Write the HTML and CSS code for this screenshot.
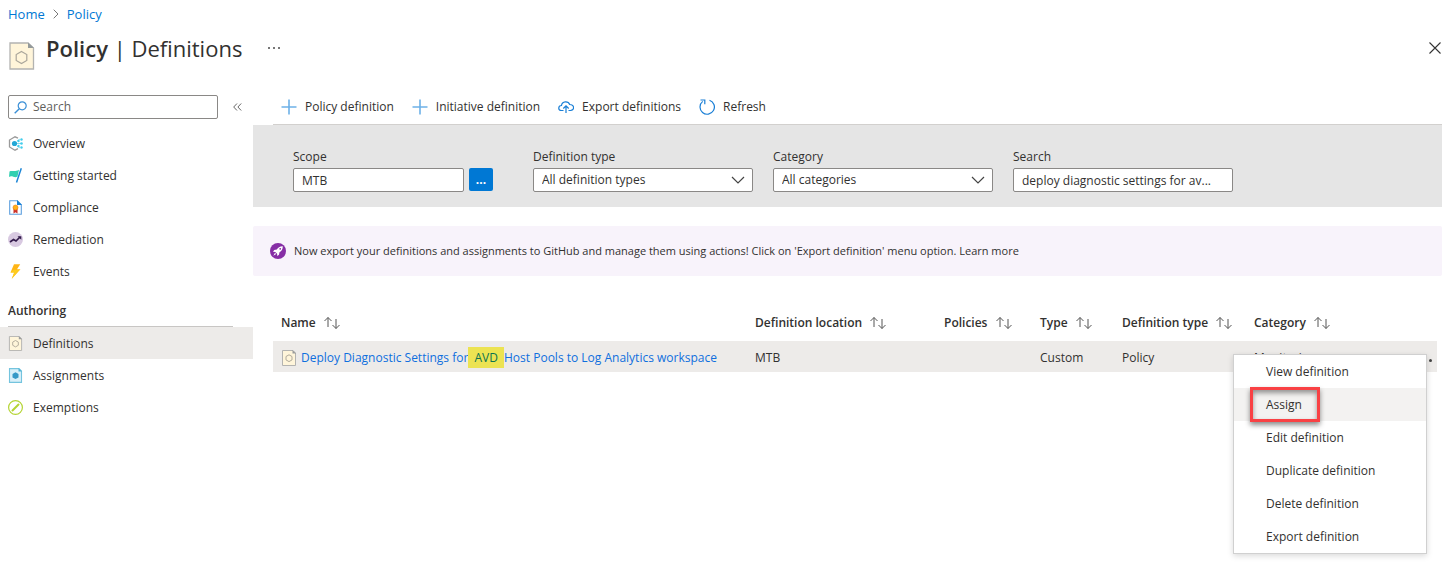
FILE: index.html
```html
<!DOCTYPE html>
<html lang="en">
<head>
    <meta charset="UTF-8">
    <meta name="viewport" content="width=device-width, initial-scale=1.0">
    <title>Policy | Definitions</title>
    <link rel="stylesheet" href="styles.css">
</head>
<body>
    <!-- Shared icons -->
    <svg class="sprite" width="0" height="0">
        <symbol id="icon-definition" viewBox="0 0 16 16">
            <path d="M1.500 .5h10.500l2.500 2.500v12.500h-13z" fill="#fff5da" stroke="#b3b3b1"/>
            <path d="M11.500 0l3.500 3.500h-3.500z" fill="#999b9b"/>
            <path d="M8 4.800l3 1.700v3.400l-3 1.700-3-1.700V6.500z" fill="none" stroke="#b0aa9b"/>
        </symbol>
        <symbol id="icon-sort" viewBox="0 0 18 14">
            <path d="M5 11V1.500M1.500 5L5 1.500 8.500 5M13 3v9.500M9.500 9l3.500 3.500L16.500 9" fill="none" stroke="#555"/>
        </symbol>
        <symbol id="icon-plus" viewBox="0 0 16 16">
            <path d="M8 .5v15M.5 8h15" fill="none" stroke="#6db1e8" stroke-width="1.600"/>
        </symbol>
        <symbol id="icon-chevron" viewBox="0 0 14 8">
            <path d="M1 1l6 6 6-6" fill="none" stroke="#444" stroke-width="1.200"/>
        </symbol>
    </svg>

    <nav class="breadcrumb" aria-label="Breadcrumb">
        <a href="#">Home</a>
        <svg width="6" height="10" viewBox="0 0 6 10"><path d="M.7 .7L5 5 .7 9.300" fill="none" stroke="#777"/></svg>
        <a href="#">Policy</a>
    </nav>

    <header class="page-header">
        <svg class="page-icon" width="26" height="28" viewBox="0 0 26 28">
            <path d="M1 1h18l5.500 5v21H1z" fill="#fff5da" stroke="#b3b3b1" stroke-width="1.300"/>
            <path d="M19 .5l6 5.500h-6z" fill="#949a9b"/>
            <path d="M12.500 9.500l5.300 3v6l-5.300 3-5.300-3v-6z" fill="none" stroke="#aaa69b" stroke-width="1.200"/>
        </svg>
        <h1><b>Policy</b> | Definitions</h1>
        <button class="more" aria-label="More">
            <svg width="12" height="2" viewBox="0 0 12 2"><path d="M0 0h2v2H0zM5 0h2v2H5zM10 0h2v2h-2z" fill="#777"/></svg>
        </button>
        <button class="close" aria-label="Close">
            <svg width="12" height="12" viewBox="0 0 12 12"><path d="M.5 .5l11 11M11.500 .5l-11 11" fill="none" stroke="#333" stroke-width="1.100"/></svg>
        </button>
    </header>

    <div class="layout">
        <aside class="sidebar">
            <div class="sidebar-top">
                <label class="search-box">
                    <svg width="13" height="13" viewBox="0 0 13 13"><circle cx="8.200" cy="4.800" r="4" fill="none" stroke="#3a8fd6" stroke-width="1.200"/><path d="M5.300 7.700L.7 12.300" stroke="#3a8fd6" stroke-width="1.400"/></svg>
                    <input type="text" placeholder="Search" aria-label="Search menu">
                </label>
                <button class="collapse" aria-label="Collapse menu">
                    <svg width="9" height="8" viewBox="0 0 9 8"><path d="M4 .5L.7 4 4 7.500M8.200 .5L4.900 4l3.300 3.500" fill="none" stroke="#666"/></svg>
                </button>
            </div>
            <nav class="menu" aria-label="Policy">
                <a href="#">
                    <svg width="15" height="15" viewBox="0 0 15 15">
                        <path d="M10 2.200L7 .8 1.500 4v7L7 14.200l3-1.500" fill="none" stroke="#9a9a9a" stroke-width="1.300"/>
                        <path d="M7 7.500h6M9 5l3-2M9 10l3 2" stroke="#8bdcf0"/>
                        <circle cx="6.500" cy="7.500" r="2.600" fill="#22a7d6"/>
                        <g fill="#42cdec"><circle cx="10.500" cy="5" r="1.200"/><circle cx="10.500" cy="10" r="1.200"/><circle cx="13.500" cy="3.500" r="1.200"/><circle cx="13.500" cy="7.500" r="1.300"/><circle cx="13.500" cy="11.500" r="1.200"/></g>
                    </svg>
                    Overview
                </a>
                <a href="#">
                    <svg width="15" height="15" viewBox="0 0 15 15">
                        <path d="M1.500 3.500C4 1.800 6 4.500 11 1.800L9.500 8.500C6.500 10.500 4 7 1 9z" fill="#32d0b1"/>
                        <path d="M13.300 .3L8.500 14.500" stroke="#1d86d6" stroke-width="1.500"/>
                    </svg>
                    Getting started
                </a>
                <a href="#">
                    <svg width="15" height="15" viewBox="0 0 15 15">
                        <path d="M1.700 .7h7.600l4 4v9.600H1.700z" fill="#fff" stroke="#5ea0df" stroke-width="1.100"/>
                        <path d="M9 0v5h5z" fill="#1480d8"/>
                        <path d="M5.500 8h4v5.500l-2-1.300-2 1.300z" fill="#cc3129"/>
                        <circle cx="7.500" cy="7.500" r="2.500" fill="#ffb219" stroke="#ec7b16" stroke-width=".6"/>
                    </svg>
                    Compliance
                </a>
                <a href="#">
                    <svg width="15" height="15" viewBox="0 0 15 15">
                        <circle cx="7.500" cy="7.500" r="7.500" fill="#d8c9e1"/>
                        <path d="M2 10l3.500-2.500 2.500 1.500 4-4" fill="none" stroke="#331b4b" stroke-width="1.700"/>
                        <path d="M9.500 4.200h3.800v3.600z" fill="#331b4b"/>
                    </svg>
                    Remediation
                </a>
                <a href="#">
                    <svg width="15" height="15" viewBox="0 0 15 15">
                        <path d="M6 .3h6.200L9 5.200h3.500L3.800 14.700l2.400-6.200H2.500z" fill="#ffb515"/>
                        <path d="M5.500 5.700h6L3.800 14.700l2.400-6.200H2.500z" fill="#fdcc1f"/>
                    </svg>
                    Events
                </a>
                <h2>Authoring</h2>
                <a href="#" class="active">
                    <svg width="15" height="15"><use href="#icon-definition"/></svg>
                    Definitions
                </a>
                <a href="#">
                    <svg width="15" height="15" viewBox="0 0 15 15">
                        <path d="M1.500 .6h9.500l2.500 2.500v11.300h-12z" fill="#daf0f9" stroke="#74c4de" stroke-width="1.100"/>
                        <path d="M10.500 0l3.500 3.500h-3.500z" fill="#52b4d6"/>
                        <path d="M7.500 4.200l3 1.700v3.500l-3 1.700-3-1.700V5.900z" fill="#3799c7"/>
                    </svg>
                    Assignments
                </a>
                <a href="#">
                    <svg width="15" height="15" viewBox="0 0 15 15">
                        <circle cx="7.500" cy="7.500" r="6.900" fill="#fff" stroke="#b4d433" stroke-width="1.200"/>
                        <path d="M4.500 10.500l6-6" stroke="#b4d433" stroke-width="2" stroke-linecap="round"/>
                    </svg>
                    Exemptions
                </a>
            </nav>
        </aside>

        <main class="content">
            <div class="toolbar">
                <button><svg width="16" height="16"><use href="#icon-plus"/></svg>Policy definition</button>
                <button><svg width="16" height="16"><use href="#icon-plus"/></svg>Initiative definition</button>
                <button>
                    <svg width="16" height="16" viewBox="0 0 16 16">
                        <path d="M5.500 11.500H3.300C-.2 11.300 0 6.700 3.500 6.500 4 2 10.300 1.700 11.700 5.500c5 .2 5 5.800.8 6h-2" fill="none" stroke="#1a7fd6" stroke-width="1.200"/>
                        <path d="M8 14V7M5.300 9.500L8 6.800l2.700 2.700" fill="none" stroke="#1a7fd6" stroke-width="1.200"/>
                    </svg>
                    Export definitions
                </button>
                <button>
                    <svg width="16" height="16" viewBox="0 0 16 16">
                        <path d="M10.500 1.200a7.200 7.200 0 1 1-6.800 1.200" fill="none" stroke="#1a7fd6" stroke-width="1.200"/>
                        <path d="M1.500 1h4.300v4.300" fill="none" stroke="#1a7fd6" stroke-width="1.200"/>
                    </svg>
                    Refresh
                </button>
            </div>

            <div class="filters">
                <div class="field">
                    <label for="scope">Scope</label>
                    <div class="scope-row">
                        <input type="text" id="scope" value="MTB">
                        <button class="browse" aria-label="Browse scope">...</button>
                    </div>
                </div>
                <div class="field">
                    <label for="definitionType">Definition type</label>
                    <div class="select">
                        <select id="definitionType"><option>All definition types</option></select>
                        <svg width="14" height="8"><use href="#icon-chevron"/></svg>
                    </div>
                </div>
                <div class="field">
                    <label for="category">Category</label>
                    <div class="select">
                        <select id="category"><option>All categories</option></select>
                        <svg width="14" height="8"><use href="#icon-chevron"/></svg>
                    </div>
                </div>
                <div class="field">
                    <label for="search">Search</label>
                    <input type="text" id="search" value="deploy diagnostic settings for av...">
                </div>
            </div>

            <div class="banner">
                <svg width="16" height="16" viewBox="0 0 16 16">
                    <circle cx="8" cy="8" r="8" fill="#862ea5"/>
                    <path d="M12.800 3.200c-3-.1-4.700 1.300-6 3.300l-2.600.5L3 8.700l2.300.2 1.800 1.800.2 2.300L9 11.800l.5-2.600c2-1.300 3.400-3 3.300-6z" fill="#fff"/>
                    <path d="M5 9.800L3.300 12.700 6.200 11z" fill="#fff"/>
                    <circle cx="10.200" cy="5.800" r=".9" fill="#862ea5"/>
                </svg>
                <span>Now export your definitions and assignments to GitHub and manage them using actions! Click on 'Export definition' menu option. <a href="#">Learn more</a></span>
            </div>

            <table class="definitions">
                <colgroup>
                    <col>
                    <col class="col-location">
                    <col class="col-policies">
                    <col class="col-type">
                    <col class="col-definition">
                    <col class="col-category">
                    <col class="col-actions">
                </colgroup>
                <thead>
                    <tr>
                        <th>Name <svg width="18" height="14"><use href="#icon-sort"/></svg></th>
                        <th>Definition location <svg width="18" height="14"><use href="#icon-sort"/></svg></th>
                        <th>Policies <svg width="18" height="14"><use href="#icon-sort"/></svg></th>
                        <th>Type <svg width="18" height="14"><use href="#icon-sort"/></svg></th>
                        <th>Definition type <svg width="18" height="14"><use href="#icon-sort"/></svg></th>
                        <th>Category <svg width="18" height="14"><use href="#icon-sort"/></svg></th>
                        <th></th>
                    </tr>
                </thead>
                <tbody>
                    <tr>
                        <td>
                            <a href="#" class="definition-link">
                                <svg width="16" height="16"><use href="#icon-definition"/></svg>
                                <span>Deploy Diagnostic Settings for<mark> AVD </mark>Host Pools to Log Analytics workspace</span>
                            </a>
                        </td>
                        <td>MTB</td>
                        <td></td>
                        <td>Custom</td>
                        <td>Policy</td>
                        <td>Monitoring</td>
                        <td class="actions">
                            <button class="row-more" aria-label="Row actions">
                                <svg width="13" height="3" viewBox="0 0 13 3"><g fill="#444"><circle cx="1.500" cy="1.500" r="1.500"/><circle cx="6.500" cy="1.500" r="1.500"/><circle cx="11.500" cy="1.500" r="1.500"/></g></svg>
                            </button>
                            <div class="context-menu">
                                <button>View definition</button>
                                <button class="selected">Assign</button>
                                <button>Edit definition</button>
                                <button>Duplicate definition</button>
                                <button>Delete definition</button>
                                <button>Export definition</button>
                            </div>
                        </td>
                    </tr>
                </tbody>
            </table>
        </main>
    </div>
</body>
</html>
```
FILE: styles.css
```css
*, *::after {
    box-sizing: border-box;
}
body {
    min-height: 100vh;
    margin: 0;
    background: #fff;
    color: #323130;
    font-family: 'Open Sans', 'Noto Sans', sans-serif;
    font-size: 12px;
    line-height: 16px;
}
a {
    color: inherit;
    text-decoration: none;
}
button, input, select {
    font: inherit;
    color: inherit;
}
button {
    padding: 0;
    border: 0;
    background: none;
    cursor: pointer;
}
svg {
    flex: none;
}
.sprite {
    position: absolute;
}
.breadcrumb {
    display: flex;
    align-items: center;
    gap: 8px;
    height: 28px;
    padding: 0 8px;
    color: #0078d4;
    font-size: 13px;
}
.page-header {
    display: flex;
    align-items: center;
    height: 40px;
    padding: 0 1px 0 9px;
}
.page-icon {
    margin-top: 16px;
}
h1 {
    margin: 0 26px 0 11px;
    font-size: 22px;
    font-weight: 400;
    line-height: 40px;
}
h1 b {
    font-weight: 600;
}
.more {
    display: flex;
}
.close {
    display: flex;
    margin-left: auto;
}
.layout {
    display: flex;
    padding-top: 22px;
}

/* Sidebar */
.sidebar {
    flex: none;
    width: 253px;
    padding-top: 5px;
}
.sidebar-top {
    display: flex;
    align-items: center;
    gap: 15px;
    padding-left: 8px;
    margin-bottom: 8px;
}
.search-box {
    display: flex;
    align-items: center;
    gap: 6px;
    width: 210px;
    height: 24px;
    padding: 0 5px;
    border: 1px solid #8a8886;
    border-radius: 2px;
}
.search-box input {
    width: 100%;
    padding: 0;
    border: 0;
    outline: 0;
    background: none;
}
.search-box input::placeholder {
    color: #605e5c;
    opacity: 1;
}
.collapse {
    display: flex;
}
.menu a {
    display: flex;
    align-items: center;
    gap: 10px;
    height: 32px;
    padding: 1px 0 0 8px;
}
.menu a.active {
    background: #edebe9;
}
.menu h2 {
    margin: 0 20px 0 8px;
    padding: 16px 0 7px;
    border-bottom: 1px solid #c8c6c4;
    font-size: 12px;
    font-weight: 600;
    line-height: 16px;
}

/* Content */
.content {
    flex: 1;
    min-width: 0;
}
.toolbar {
    display: flex;
    gap: 18px;
    height: 35px;
    margin-left: 20px;
    padding-left: 8px;
    border-bottom: 1px solid #d2d0ce;
}
.toolbar button {
    display: flex;
    align-items: center;
    gap: 8px;
}
.filters {
    display: flex;
    gap: 20px;
    padding: 24px 40px 15px;
    background: #e5e5e5;
}
.field {
    width: 220px;
}
.field label {
    display: block;
    margin-bottom: 3px;
}
.field input, .field select {
    display: block;
    width: 100%;
    height: 24px;
    padding: 0 8px;
    border: 1px solid #8a8886;
    border-radius: 2px;
    background: #fff;
    appearance: none;
}
.scope-row {
    display: flex;
    gap: 5px;
    padding-right: 20px;
}
.browse {
    flex: none;
    width: 24px;
    height: 23px;
    border-radius: 2px;
    background: #0078d4;
    color: #fff;
    font-weight: 700;
}
.select {
    position: relative;
}
.select svg {
    position: absolute;
    top: 8px;
    right: 8px;
    pointer-events: none;
}
.banner {
    display: flex;
    align-items: center;
    gap: 8px;
    height: 50px;
    margin: 19px 0 28px;
    padding-left: 17px;
    border-radius: 2px;
    background: #f8f3fb;
    font-size: 11px;
}
.definitions {
    width: calc(100% - 25px);
    margin-left: 20px;
    border-collapse: collapse;
    table-layout: fixed;
}
.definitions th, .definitions td {
    padding: 0 8px;
    text-align: left;
    white-space: nowrap;
}
.definitions th {
    height: 37px;
    font-weight: 600;
}
.definitions th svg {
    margin-left: 4px;
    vertical-align: middle;
}
.definitions td {
    height: 31px;
    padding-top: 2px;
    background: #edebe9;
}
.col-location {
    width: 189px;
}
.col-policies {
    width: 96px;
}
.col-type {
    width: 82px;
}
.col-definition {
    width: 132px;
}
.col-category {
    width: 141px;
}
.col-actions {
    width: 50px;
}
.definition-link {
    display: flex;
    align-items: center;
    gap: 4px;
    color: #0f6fde;
}
mark {
    padding: 2px 3px;
    background: #ece352;
    color: #0b7350;
}
.definitions .actions {
    position: relative;
    padding-right: 5px;
    text-align: right;
}
.row-more {
    display: inline-flex;
}

/* Row menu */
.context-menu {
    position: absolute;
    top: 13px;
    right: 10px;
    z-index: 1;
    width: 194px;
    border: 1px solid #d0d0d0;
    background: #fff;
    box-shadow: 0 2px 6px rgba(0, 0, 0, 0.15);
}
.context-menu button {
    display: block;
    width: 100%;
    height: 33px;
    padding: 1px 0 0 32px;
    text-align: left;
}
.context-menu .selected {
    position: relative;
    background: #f3f2f1;
}
.context-menu .selected::after {
    content: "";
    position: absolute;
    top: -1px;
    left: 16px;
    width: 70px;
    height: 35px;
    border: 3px solid #f94144;
    box-shadow: 0 3px 5px rgba(0, 0, 0, 0.45), inset 0 3px 5px rgba(0, 0, 0, 0.4);
}
```
